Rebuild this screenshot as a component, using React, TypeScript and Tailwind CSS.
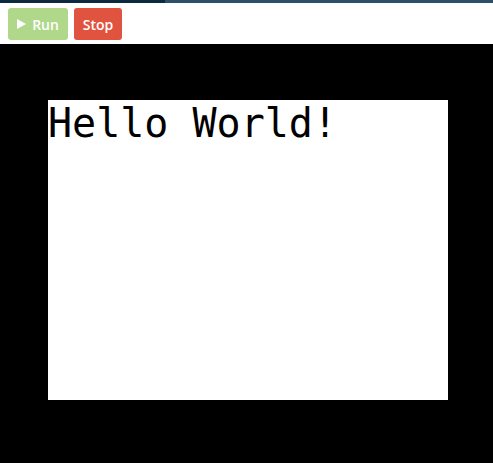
export default function App() {
  return (
    <div className="flex h-[463px] w-[493px] flex-col overflow-hidden bg-black font-['Open_Sans','Liberation_Sans',sans-serif]">
      <div className="flex h-[3px] w-full">
        <div className="h-full w-[165px] bg-[#0c2a3f]" />
        <div className="h-full flex-1 bg-[#2b5068]" />
      </div>
      <div className="flex h-[41px] items-start gap-[6px] bg-white px-[8px] pt-[5px]">
        <button
          type="button"
          className="flex h-[32px] w-[60px] items-center justify-center gap-[6px] rounded-[3px] bg-[#b0d88a] text-[14px] font-semibold text-white"
        >
          <svg width="9" height="10" viewBox="0 0 9 10" aria-hidden="true">
            <path d="M0 0 L9 5 L0 10 Z" fill="white" />
          </svg>
          Run
        </button>
        <button
          type="button"
          className="flex h-[32px] w-[48px] items-center justify-center rounded-[3px] bg-[#e0533f] text-[14px] font-semibold text-white"
        >
          Stop
        </button>
      </div>
      <div className="flex-1 pl-[48px] pt-[56px]">
        <div className="h-[300px] w-[400px] bg-white">
          <div className="font-['DejaVu_Sans_Mono',monospace] text-[40px] leading-[normal] text-black">Hello World!</div>
        </div>
      </div>
    </div>
  );
}
